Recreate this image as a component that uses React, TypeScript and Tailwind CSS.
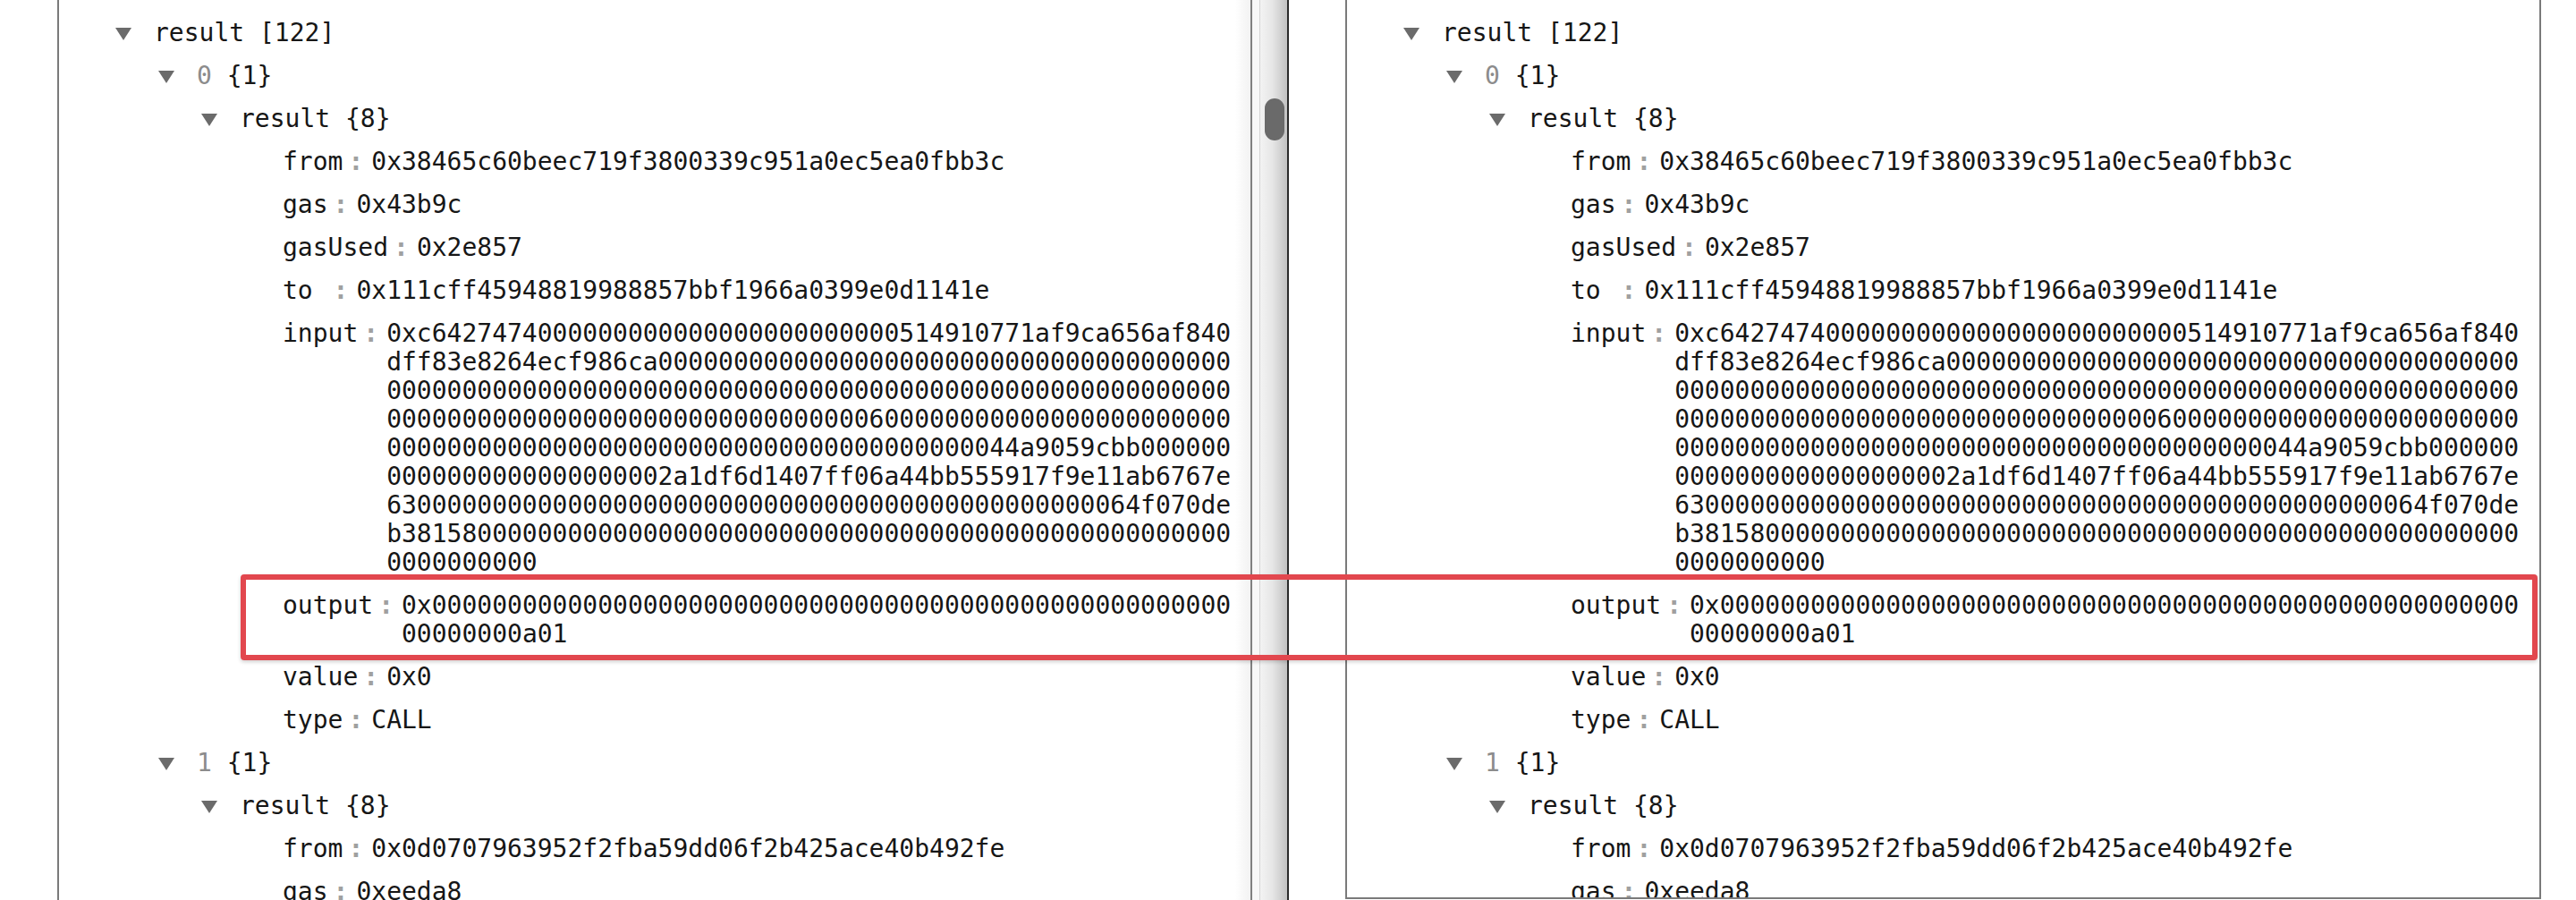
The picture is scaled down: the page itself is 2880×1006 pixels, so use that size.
import React from "react";

const INPUT =
  "0x" +
  "c6427474" +
  "0".repeat(24) +
  "514910771af9ca656af840dff83e8264ecf986ca" +
  "0".repeat(64) +
  "0".repeat(62) +
  "60" +
  "0".repeat(62) +
  "44" +
  "a9059cbb" +
  "0".repeat(24) +
  "2a1df6d1407ff06a44bb555917f9e11ab6767e63" +
  "0".repeat(46) +
  "64f070deb381580000" +
  "0".repeat(56);

const OUTPUT = "0x" + "0".repeat(61) + "a01";

const indent = ["pl-[63px]", "pl-[111px]", "pl-[159px]"];

function Caret() {
  return (
    <svg width="18" height="14" viewBox="0 0 18 14" className="mt-[2px] shrink-0">
      <polygon points="0,0 18,0 9,14" fill="#6b6b6b" />
    </svg>
  );
}

function Node({ level, children }: { level: number; children: React.ReactNode }) {
  return (
    <div className={`flex items-center gap-[25px] py-2 ${indent[level]}`}>
      <Caret />
      <div className="whitespace-pre">{children}</div>
    </div>
  );
}

function Leaf({ k, v }: { k: string; v: string }) {
  return (
    <div className="flex items-start py-2 pl-[250px] pr-[14px]">
      <span className="shrink-0 whitespace-pre">{k}</span>
      <span className="ml-[6px] mr-[9px] shrink-0 font-bold text-[#a0a0a0]">:</span>
      <span className="min-w-0 flex-1 break-all">{v}</span>
    </div>
  );
}

function Tree() {
  return (
    <div className="pt-[13px] font-['DejaVu_Sans_Mono',monospace] text-[28px] leading-[32px] text-[#161616]">
      <Node level={0}>result [122]</Node>
      <Node level={1}>
        <span className="text-[#8c8c8c]">0</span> {"{1}"}
      </Node>
      <Node level={2}>result {"{8}"}</Node>
      <Leaf k="from" v="0x38465c60beec719f3800339c951a0ec5ea0fbb3c" />
      <Leaf k="gas" v="0x43b9c" />
      <Leaf k="gasUsed" v="0x2e857" />
      <Leaf k="to " v="0x111cff45948819988857bbf1966a0399e0d1141e" />
      <Leaf k="input" v={INPUT} />
      <Leaf k="output" v={OUTPUT} />
      <Leaf k="value" v="0x0" />
      <Leaf k="type" v="CALL" />
      <Node level={1}>
        <span className="text-[#8c8c8c]">1</span> {"{1}"}
      </Node>
      <Node level={2}>result {"{8}"}</Node>
      <Leaf k="from" v="0x0d0707963952f2fba59dd06f2b425ace40b492fe" />
      <Leaf k="gas" v="0xeeda8" />
    </div>
  );
}

export default function App() {
  return (
    <div className="relative flex h-[1006px] w-[2880px] overflow-hidden bg-white">
      <div className="w-[64px] shrink-0" />

      {/* left pane */}
      <div className="h-[1006px] w-[1334px] shrink-0 overflow-hidden border-l-2 border-[#7a7a7a] bg-[linear-gradient(to_right,#ffffff_1315px,#f2f2f2)]">
        <Tree />
      </div>

      {/* scrollbar */}
      <div className="relative flex h-[1006px] w-[43px] shrink-0 border-l-2 border-r-2 border-l-[#808080] border-r-[#2b2b2b]">
        <div className="w-[8px] bg-[#f8f8f8]" />
        <div className="w-px bg-[#d4d4d4]" />
        <div className="flex-1 bg-[linear-gradient(to_right,#f3f3f3,#e6e6e6_45%,#c2c2c2)]" />
        <div className="absolute left-[14px] top-[110px] h-[47px] w-[22px] rounded-full bg-[#6a6a6a]" />
      </div>

      <div className="w-[63px] shrink-0" />

      {/* right pane */}
      <div className="h-[1005px] w-[1337px] shrink-0 overflow-hidden border-b-2 border-l-2 border-r-2 border-[#7a7a7a]">
        <Tree />
      </div>

      {/* highlight box */}
      <div className="absolute left-[269px] top-[642px] h-[96px] w-[2568px] rounded-[4px] border-[6px] border-[#e2474e] shadow-[0_2px_4px_rgba(0,0,0,0.18)]" />
    </div>
  );
}
